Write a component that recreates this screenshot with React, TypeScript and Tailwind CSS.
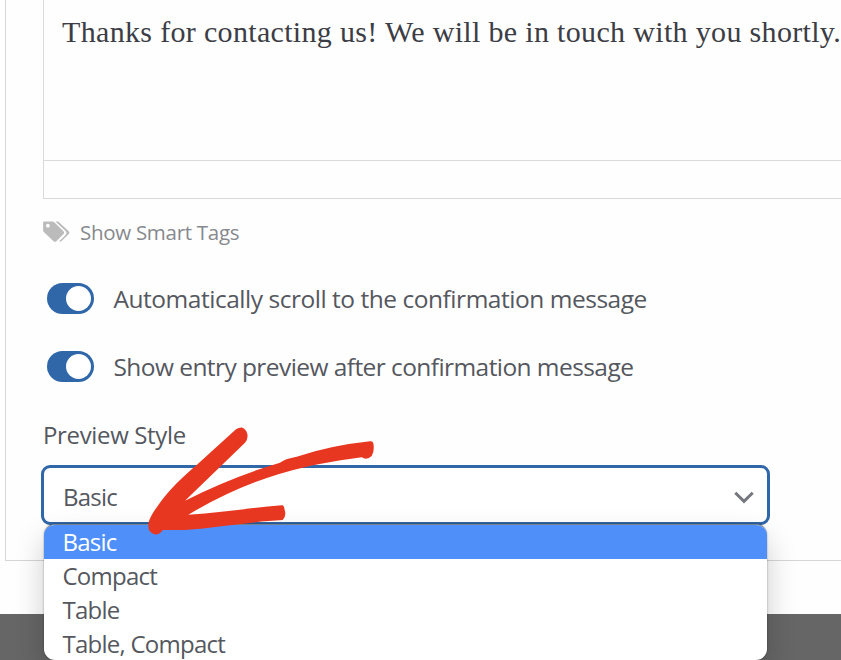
import { useState } from "react"

const styles = ["Basic", "Compact", "Table", "Table, Compact"]

interface ToggleRowProps {
  label: string
  className: string
}

function TagsIcon() {
  return (
    <svg viewBox="0 0 27 22" className="h-[22px] w-[27px] shrink-0">
      <path
        fill="#bbbbbb"
        fillRule="evenodd"
        d="M1.2 .5h8.1c.9 0 1.500.3 2.200.9l9 8.900c.8.8.8 1.800.1 2.600l-7.300 7.300c-.8.8-1.900.8-2.700 0L1.300 11.400C.4 10.600.1 9.800.1 8.900V1.600c0-.6.5-1.100 1.100-1.100Zm3.700 2.300a1.900 1.900 0 1 0 0 3.800 1.900 1.900 0 0 0 0-3.800Z"
      />
      <path
        fill="#bbbbbb"
        d="M12.500.5h1.700c.9 0 1.500.4 2.100.9l9.400 8.900c.9.9.9 1.800.1 2.600l-7.200 7.200c-.7.8-1.600.8-2.300.2l6.200-6.300c1.400-1.400 1.300-2.700.1-3.900L12.500.5Z"
      />
    </svg>
  )
}

function Chevron() {
  return (
    <svg viewBox="0 0 20 13" className="h-[13px] w-[20px] shrink-0">
      <path d="M1.3 1.8 10 10.4 18.7 1.8" fill="none" stroke="#74777d" strokeWidth="3" />
    </svg>
  )
}

function ToggleRow({ label, className }: ToggleRowProps) {
  const [on, setOn] = useState(true)

  return (
    <div className="flex h-[68px] items-center pl-[4px]">
      <button
        role="switch"
        aria-checked={on}
        aria-label={label}
        onClick={() => setOn(!on)}
        className={`flex h-[31px] w-[47px] items-center rounded-full px-[3px] ${on ? "justify-end bg-[#3067a8]" : "justify-start bg-[#bbbbbb]"}`}
      >
        <span className="h-[25px] w-[25px] rounded-full bg-white" />
      </button>
      <span className={`ml-[19.5px] pt-px text-[24.5px] leading-[34px] ${className}`}>{label}</span>
    </div>
  )
}

function Arrow() {
  return (
    <svg viewBox="0 0 780 420" className="pointer-events-none absolute left-[130px] top-[410px] h-[140px] w-[260px]">
      <path
        fill="#e83721"
        d="M55 345C56 325 74 300 92 275C120 237 160 199 200 165L318 58Q338 44 349 64Q358 82 345 98L165 272Q305 201 450 158Q464 146 500 140Q605 106 720 94Q728 92 730 100Q734 125 725 138Q711 152 695 142C640 149 580 160 530 170Q350 210 175 314C270 309 360 293 455 286Q462 284 464 300Q470 318 458 330C370 334 270 352 165 360H98C88 378 65 378 56 358Z"
      />
    </svg>
  )
}

export default function App() {
  const [selected, setSelected] = useState("Basic")

  return (
    <div className="relative h-[660px] w-[841px] overflow-hidden whitespace-nowrap bg-[#666666] font-['Open_Sans','Noto_Sans',sans-serif] text-[#55585e]">
      <div className="h-[614px] bg-[#fefefe] pl-[5px]">
        <div className="h-[561px] border-b border-l border-[#d5d6d8] pl-[37px]">
          {/* Message editor */}
          <div className="h-[199px] border-b border-l border-[#d9dadb]">
            <div className="h-[161px] border-b border-[#d9dadb] pl-[18px] pt-[12px] font-[Georgia,'Liberation_Serif',serif] text-[30px] leading-[40px] tracking-[0.33px] text-[#3c3d45]">
              Thanks for contacting us! We will be in touch with you shortly.
            </div>
          </div>

          {/* Smart tags */}
          <div className="flex h-[65px] items-center gap-[10px] text-[20.5px] text-[#86898d]">
            <TagsIcon />
            <span className="pt-[2px] tracking-[-0.29px]">Show Smart Tags</span>
          </div>

          <div>
            <ToggleRow label="Automatically scroll to the confirmation message" className="tracking-[-0.47px]" />
            <ToggleRow label="Show entry preview after confirmation message" className="tracking-[-0.57px]" />
          </div>

          {/* Preview style */}
          <div className="pt-[18px] text-[24px] leading-[34px] tracking-[-0.35px]">Preview Style</div>
          <div className="-ml-[2px] mt-[13px] flex h-[60px] w-[729px] items-center justify-between rounded-[9px] border-[3px] border-[#3067a8] bg-white pl-[19px] pr-[13px] pt-[4px] text-[24px] tracking-[-0.75px]">
            <span>{selected}</span>
            <Chevron />
          </div>
        </div>
      </div>

      <ul className="absolute left-[44px] top-[524px] h-[136px] w-[723px] overflow-hidden rounded-[11px] border-t border-[#77828f] bg-white text-[24px] leading-[34px] tracking-[-0.75px] shadow-[0_0_2px_rgba(0,0,0,0.4),0_14px_30px_rgba(0,0,0,0.2)]">
        {styles.map((s) => (
          <li
            key={s}
            onClick={() => setSelected(s)}
            className={`h-[34px] pl-[18.5px] ${s === selected ? "bg-[#4f8ff9] text-white" : ""}`}
          >
            {s}
          </li>
        ))}
      </ul>

      <Arrow />
    </div>
  )
}
